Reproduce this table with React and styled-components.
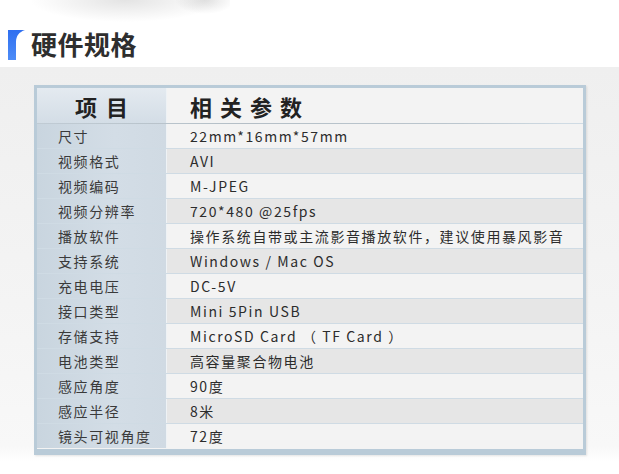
import React from 'react';
import styled, { createGlobalStyle } from 'styled-components';

const specs = [
  ['尺寸', '22mm*16mm*57mm'],
  ['视频格式', 'AVI'],
  ['视频编码', 'M-JPEG'],
  ['视频分辨率', '720*480 @25fps'],
  ['播放软件', '操作系统自带或主流影音播放软件，建议使用暴风影音'],
  ['支持系统', 'Windows / Mac OS'],
  ['充电电压', 'DC-5V'],
  ['接口类型', 'Mini 5Pin USB'],
  ['存储支持', 'MicroSD Card （ TF Card ）'],
  ['电池类型', '高容量聚合物电池'],
  ['感应角度', '90度'],
  ['感应半径', '8米'],
  ['镜头可视角度', '72度'],
];

const GlobalStyle = createGlobalStyle`
  body {
    margin: 0;
    background: #fff;
    font-family: "Noto Sans CJK SC", "Noto Sans", sans-serif;
    color: #333;
  }
`;

const Page = styled.div`
  width: 619px;
  height: 474px;
  overflow: hidden;
  background: #fff;
`;

const TopStrip = styled.div`
  height: 24px;
  display: flex;
`;

const Smudge = styled.div`
  margin-left: 30px;
  width: 200px;
  height: 24px;
  background:
    radial-gradient(ellipse 30px 14px at 175px 0px, rgba(140,140,140,0.25), transparent),
    radial-gradient(ellipse 95px 22px at 95px 0px, rgba(205,205,205,0.55), transparent);
`;

const TitleRow = styled.div`
  height: 43px;
  display: flex;
  align-items: flex-start;
  padding: 5px 0 0 8px;
  box-sizing: border-box;
  gap: 6px;
`;

const Marker = styled.div`
  width: 17px;
  height: 30px;
  margin-top: 1px;
  background: linear-gradient(180deg, #2f6ff0, #4d8cf7);
  clip-path: path('M0 0 H17 C11 2 8 6 8 12 V30 H0 Z');
`;

const Title = styled.h1`
  margin: 0;
  font-size: 26px;
  line-height: 30px;
  font-weight: 700;
  color: #2e2e2e;
  letter-spacing: 0.5px;
`;

const Panel = styled.div`
  padding: 18px 33px 7px 34px;
  background: linear-gradient(180deg, #efefef 0%, #f4f4f4 60%, #f8f8f8 96%, #fff 100%);
`;

const Table = styled.div`
  border: 3px solid #b9cbd8;
  border-bottom-width: 6px;
  background: #f3f3f3;
  box-shadow: 1px 1px 2px rgba(0,0,0,0.1);
`;

const Row = styled.div`
  display: grid;
  grid-template-columns: 130px 1fr;
  height: ${p => (p.$head ? '35px' : '24px')};
  border-bottom: 1px solid ${p => (p.$last ? 'transparent' : '#cfdbe4')};
  position: relative;
`;

const Label = styled.div`
  display: flex;
  align-items: center;
  padding-left: ${p => (p.$head ? '38px' : '21px')};
  border-right: 1px solid #eef2f5;
  background: ${p => (p.$head
    ? 'linear-gradient(180deg, #e4eaf0 0%, #d3dde6 100%)'
    : 'linear-gradient(90deg, #c9d5df 0%, #d3dde6 60%, #d0dae3 100%)')};
  font-size: ${p => (p.$head ? '22px' : '14px')};
  font-weight: ${p => (p.$head ? 700 : 400)};
  letter-spacing: ${p => (p.$head ? '2px' : '1.6px')};
  color: ${p => (p.$head ? '#222' : '#3a3a3a')};
  white-space: pre;
`;

const Value = styled.div`
  display: flex;
  align-items: center;
  padding-left: 23px;
  background: ${p => (p.$head ? '#f3f3f3' : p.$alt ? '#e6e6e6' : '#f3f3f3')};
  font-size: ${p => (p.$head ? '22px' : '14px')};
  font-weight: ${p => (p.$head ? 700 : 400)};
  letter-spacing: ${p => (p.$head ? '1.5px' : '1.6px')};
  color: ${p => (p.$head ? '#222' : '#2c2c2c')};
  white-space: pre;
`;

const HeadShadow = styled.div`
  position: absolute;
  left: 0;
  right: 20px;
  bottom: -6px;
  height: 6px;
  background: linear-gradient(90deg, rgba(0,0,0,0.08) 0%, rgba(0,0,0,0.14) 40%, rgba(0,0,0,0.1) 80%, rgba(0,0,0,0) 100%);
  -webkit-mask-image: linear-gradient(180deg, #000, transparent);
  mask-image: linear-gradient(180deg, #000, transparent);
  pointer-events: none;
`;

export default function App() {
  return (
    <Page>
      <GlobalStyle />
      <TopStrip>
        <Smudge />
      </TopStrip>
      <TitleRow>
        <Marker />
        <Title>硬件规格</Title>
      </TitleRow>
      <Panel>
        <Table>
          <Row $head>
            <Label $head>{'项 目'}</Label>
            <Value $head>{'相 关 参 数'}</Value>
            <HeadShadow />
          </Row>
          {specs.map(([k, v], i) => (
            <Row key={k} $last={i === specs.length - 1}>
              <Label>{k}</Label>
              <Value $alt={i % 2 === 1}>{v}</Value>
            </Row>
          ))}
        </Table>
      </Panel>
    </Page>
  );
}
